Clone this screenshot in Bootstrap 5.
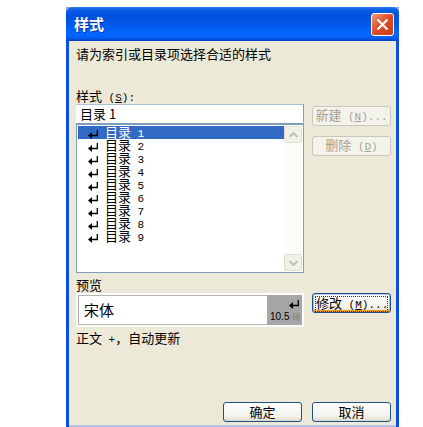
<!DOCTYPE html>
<html lang="zh-CN">
<head>
<meta charset="utf-8">
<meta name="viewport" content="width=device-width, initial-scale=1">
<title>样式</title>
<link href="https://cdn.jsdelivr.net/npm/bootstrap@5.3.0/dist/css/bootstrap.min.css" rel="stylesheet">
<style>
body { background: #fff; color: #000; font: 13px/16px "Noto Sans CJK SC", sans-serif; padding: 7px 24px 0 66px; }
.half { font-family: "Liberation Mono", monospace; font-size: 11px; white-space: pre; }
.frame { background: #8aa5e0; }
.win { background: #ece9d8; border: 3px solid #0a4fe4; border-top: 0; border-bottom: 0; border-radius: 7px 7px 0 0; }
.win-title { height: 34px; margin: 0 -3px; padding: 0 5px 0 8px; border-radius: 7px 7px 0 0; color: #fff;
  background: linear-gradient(#2f7cf0 0, #0a5ce8 3px, #0050dc 8px, #0056e8 16px, #0566ff 26px, #0563fb 30px, #0040c8 34px); }
.win-title h1 { font-size: 15px; line-height: 20px; font-weight: 700; text-shadow: 1px 1px #0a2f9a; }
.close-btn { width: 23px; height: 23px; border: 1px solid #fff; border-radius: 3px; background: linear-gradient(135deg, #f09a80, #e04a22 50%, #c83c14); }
.win-body { padding: 5px 5px 3px 7px; border-bottom: 2px solid #b4c6e8; }
.intro { margin: 0 0 22px; }
.name-label { padding-top: 4px; height: 20px; }
.field { height: 19px; border: 1px solid #fff; border-top-color: #a9bfd2; border-right-color: #7f9db9; padding: 0 3px; background: #fff; }
.field:focus { outline: 0; }
.side { width: 79px; flex: none; }
.side-list { padding-top: 22px; gap: 10px; }
.list-frame { height: 150px; border: 2px solid #7f9db9; border-width: 2px 1px 1px; background: #fff; padding: 1px; }
.entry { height: 13px; font-family: "Liberation Sans", "Noto Sans CJK SC", sans-serif; font-size: 13px; line-height: 13px; padding-left: 10px; }
.entry svg { margin-right: 7px; margin-top: 4px; }
.entry.chosen { background: #316ac5; color: #fff; }
.chosen svg { color: #000; }
.scroll { width: 18px; background: #fcfcf7; }
.scroll button { height: 17px; border: 1px solid #dddccd; border-radius: 3px; background: #f2f1e8; color: #c2c1b4; }
.xp { height: 20px; border: 1px solid #204f85; border-radius: 3px; background: linear-gradient(#fff, #f3f2ea 75%, #dcd8cb); color: #000; line-height: 16px; white-space: nowrap; }
.xp:disabled { color: #a5a294; border-color: #c9c7ba; background: #f4f3ea; }
.xp.focused { border-color: #1f4f88; box-shadow: inset 0 1px #b9cdee, inset 0 -2px #eb9e20, inset 1px 0 #f3b23f, inset -1px 0 #f3b23f; padding: 2px; }
.focused > span { display: block; border: 1px dotted #333; line-height: 12px; }
.preview { height: 34px; border: 2px solid #fff; background: #fff; }
.preview-inner { border: 1px solid #b4b4b4; font-size: 15px; padding-left: 5px; }
.badge-size { width: 35px; margin: -1px; background: #a6a6a6; font: 10px/12px "Liberation Sans", sans-serif; padding: 5px 3px 2px; }
.badge-size small { font: 8px/12px "Noto Sans CJK SC", sans-serif; color: #808080; }
.summary { padding-top: 3px; }
.foot { margin-top: 54px; gap: 10px; }
</style>
<script src="https://cdn.jsdelivr.net/npm/bootstrap@5.3.0/dist/js/bootstrap.bundle.min.js"></script>
</head>
<body>
<svg class="d-none"><symbol id="ret" viewBox="0 0 10 9"><path d="M9.300 0v5.500H3" fill="none" stroke="currentColor" stroke-width="1.300"/><path d="M0 5.500 4 2v7z" fill="currentColor"/></symbol></svg>
<div class="frame">
<main class="win" role="dialog" aria-labelledby="ttl">
  <header class="win-title d-flex align-items-center justify-content-between">
    <h1 id="ttl" class="m-0">样式</h1>
    <button type="button" class="close-btn p-0 d-flex align-items-center justify-content-center" aria-label="关闭">
      <svg width="13" height="13" viewBox="0 0 13 13"><path d="M1.500 1.500l10 10m0-10l-10 10" stroke="#fff" stroke-width="2.200"/></svg>
    </button>
  </header>
  <div class="win-body">
    <p class="intro">请为索引或目录项选择合适的样式</p>
    <div class="d-flex gap-2">
      <div class="flex-fill">
        <label for="style-name" class="name-label d-block">样式<span class="half"> (<u>S</u>):</span></label>
        <input id="style-name" class="field d-block w-100 rounded-0" value="目录 1">
        <div class="list-frame d-flex">
          <ul class="list-unstyled m-0 flex-fill" role="listbox" aria-label="样式">
            <li class="entry chosen d-flex" role="option" aria-selected="true"><svg width="10" height="9"><use href="#ret"/></svg><span>目录<span class="half"> 1</span></span></li>
            <li class="entry d-flex" role="option"><svg width="10" height="9"><use href="#ret"/></svg><span>目录<span class="half"> 2</span></span></li>
            <li class="entry d-flex" role="option"><svg width="10" height="9"><use href="#ret"/></svg><span>目录<span class="half"> 3</span></span></li>
            <li class="entry d-flex" role="option"><svg width="10" height="9"><use href="#ret"/></svg><span>目录<span class="half"> 4</span></span></li>
            <li class="entry d-flex" role="option"><svg width="10" height="9"><use href="#ret"/></svg><span>目录<span class="half"> 5</span></span></li>
            <li class="entry d-flex" role="option"><svg width="10" height="9"><use href="#ret"/></svg><span>目录<span class="half"> 6</span></span></li>
            <li class="entry d-flex" role="option"><svg width="10" height="9"><use href="#ret"/></svg><span>目录<span class="half"> 7</span></span></li>
            <li class="entry d-flex" role="option"><svg width="10" height="9"><use href="#ret"/></svg><span>目录<span class="half"> 8</span></span></li>
            <li class="entry d-flex" role="option"><svg width="10" height="9"><use href="#ret"/></svg><span>目录<span class="half"> 9</span></span></li>
          </ul>
          <div class="scroll d-flex flex-column justify-content-between">
            <button type="button" class="p-0 d-flex align-items-center justify-content-center" aria-label="向上"><svg width="9" height="6"><path d="M.5 5l4-4 4 4" fill="none" stroke="currentColor" stroke-width="2"/></svg></button>
            <button type="button" class="p-0 d-flex align-items-center justify-content-center" aria-label="向下"><svg width="9" height="6"><path d="M.5 1l4 4 4-4" fill="none" stroke="currentColor" stroke-width="2"/></svg></button>
          </div>
        </div>
      </div>
      <div class="side side-list d-flex flex-column">
        <button type="button" class="xp w-100 p-0" disabled>新建<span class="half"> (<u>N</u>)...</span></button>
        <button type="button" class="xp w-100 p-0" disabled>删除<span class="half"> (<u>D</u>)</span></button>
      </div>
    </div>
    <div class="pt-1">预览</div>
    <div class="d-flex gap-2">
      <div class="preview d-flex flex-fill">
        <div class="preview-inner d-flex flex-fill align-items-center justify-content-between">
          <span>宋体</span>
          <div class="badge-size d-flex flex-column justify-content-between align-self-stretch">
            <svg class="align-self-end" width="10" height="9"><use href="#ret"/></svg>
            <div class="text-nowrap">10.5 <small>磅</small></div>
          </div>
        </div>
      </div>
      <div class="side"><button type="button" class="xp focused w-100"><span>修改<span class="half"> (<u>M</u>)...</span></span></button></div>
    </div>
    <div class="summary">正文<span class="half"> +</span>，自动更新</div>
    <div class="foot d-flex justify-content-end">
      <button type="button" class="xp side p-0">确定</button>
      <button type="button" class="xp side p-0">取消</button>
    </div>
  </div>
</main>
</div>
</body>
</html>
